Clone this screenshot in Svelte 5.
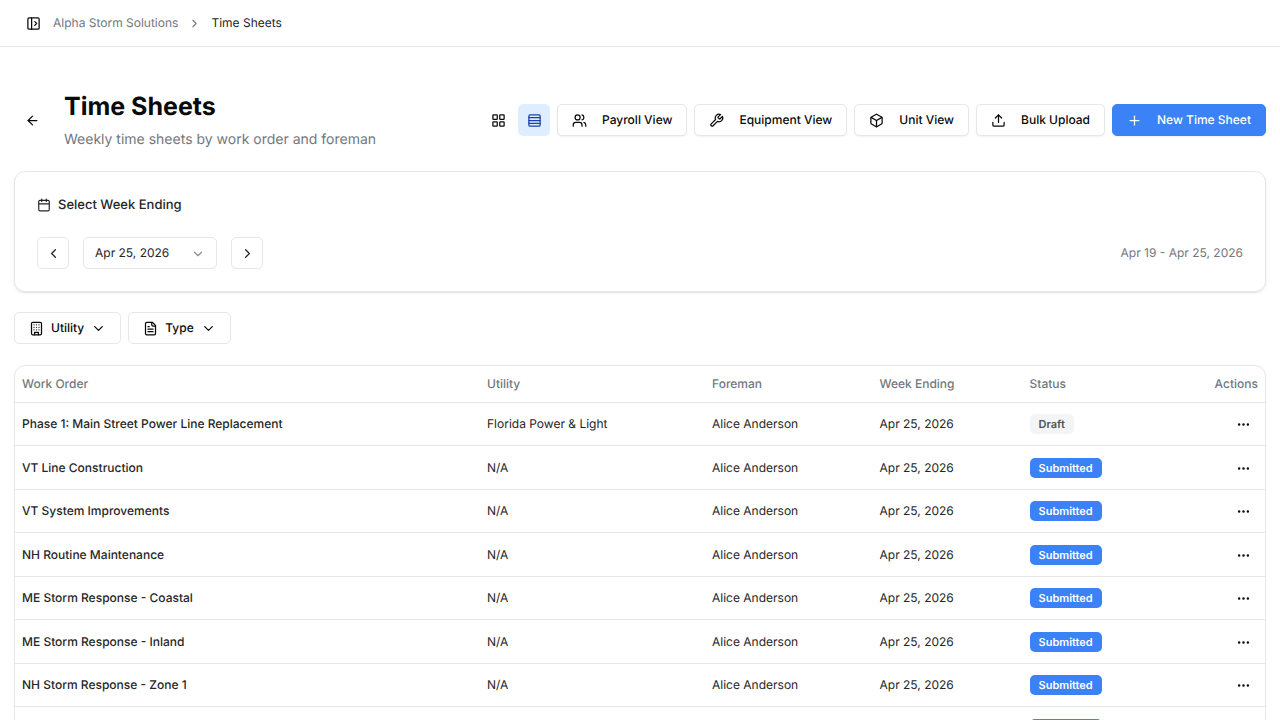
<script lang="ts">
  interface TimeSheet {
    workOrder: string;
    utility: string;
    foreman: string;
    weekEnding: string;
    status: 'Draft' | 'Submitted';
  }

  let view = $state('list');
  let weekEnding = $state('Apr 25, 2026');

  const names = [
    'VT Line Construction',
    'VT System Improvements',
    'NH Routine Maintenance',
    'ME Storm Response - Coastal',
    'ME Storm Response - Inland',
    'NH Storm Response - Zone 1',
    'NH Storm Response - Zone 2',
  ];

  const timeSheets: TimeSheet[] = [
    {
      workOrder: 'Phase 1: Main Street Power Line Replacement',
      utility: 'Florida Power & Light',
      foreman: 'Alice Anderson',
      weekEnding: 'Apr 25, 2026',
      status: 'Draft',
    },
    ...names.map((workOrder): TimeSheet => ({
      workOrder,
      utility: 'N/A',
      foreman: 'Alice Anderson',
      weekEnding: 'Apr 25, 2026',
      status: 'Submitted',
    })),
  ];

  const views = [
    { label: 'Payroll View', icon: 'users' },
    { label: 'Equipment View', icon: 'wrench' },
    { label: 'Unit View', icon: 'box' },
    { label: 'Bulk Upload', icon: 'upload' },
  ];

  const filters = [
    { label: 'Utility', icon: 'building' },
    { label: 'Type', icon: 'file' },
  ];

  const icons: Record<string, string[]> = {
    panel: ['M5 3h14a2 2 0 0 1 2 2v14a2 2 0 0 1-2 2H5a2 2 0 0 1-2-2V5a2 2 0 0 1 2-2z', 'M9 3v18', 'm14 9 3 3-3 3'],
    right: ['m9 18 6-6-6-6'],
    left: ['m15 18-6-6 6-6'],
    down: ['m6 9 6 6 6-6'],
    back: ['m12 19-7-7 7-7', 'M19 12H5'],
    grid: [
      'M4 3h5a1 1 0 0 1 1 1v5a1 1 0 0 1-1 1H4a1 1 0 0 1-1-1V4a1 1 0 0 1 1-1z',
      'M15 3h5a1 1 0 0 1 1 1v5a1 1 0 0 1-1 1h-5a1 1 0 0 1-1-1V4a1 1 0 0 1 1-1z',
      'M15 14h5a1 1 0 0 1 1 1v5a1 1 0 0 1-1 1h-5a1 1 0 0 1-1-1v-5a1 1 0 0 1 1-1z',
      'M4 14h5a1 1 0 0 1 1 1v5a1 1 0 0 1-1 1H4a1 1 0 0 1-1-1v-5a1 1 0 0 1 1-1z',
    ],
    rows: [
      'M5 3h14a2 2 0 0 1 2 2v14a2 2 0 0 1-2 2H5a2 2 0 0 1-2-2V5a2 2 0 0 1 2-2z',
      'M21 7.5H3', 'M21 12H3', 'M21 16.5H3',
    ],
    users: [
      'M16 21v-2a4 4 0 0 0-4-4H6a4 4 0 0 0-4 4v2',
      'M13 7a4 4 0 1 1-8 0a4 4 0 0 1 8 0z',
      'M22 21v-2a4 4 0 0 0-3-3.87',
      'M16 3.13a4 4 0 0 1 0 7.75',
    ],
    wrench: ['M14.7 6.3a1 1 0 0 0 0 1.4l1.6 1.6a1 1 0 0 0 1.4 0l3.77-3.77a6 6 0 0 1-7.94 7.94l-6.91 6.91a2.12 2.12 0 0 1-3-3l6.91-6.91a6 6 0 0 1 7.94-7.94l-3.76 3.76z'],
    box: [
      'M21 8a2 2 0 0 0-1-1.73l-7-4a2 2 0 0 0-2 0l-7 4A2 2 0 0 0 3 8v8a2 2 0 0 0 1 1.73l7 4a2 2 0 0 0 2 0l7-4A2 2 0 0 0 21 16Z',
      'm3.3 7 8.7 5 8.7-5', 'M12 22V12',
    ],
    upload: ['M21 15v4a2 2 0 0 1-2 2H5a2 2 0 0 1-2-2v-4', 'm17 8-5-5-5 5', 'M12 3v12'],
    plus: ['M5 12h14', 'M12 5v14'],
    calendar: ['M8 2v4', 'M16 2v4', 'M5 4h14a2 2 0 0 1 2 2v14a2 2 0 0 1-2 2H5a2 2 0 0 1-2-2V6a2 2 0 0 1 2-2z', 'M3 10h18'],
    building: [
      'M6 2h12a2 2 0 0 1 2 2v16a2 2 0 0 1-2 2H6a2 2 0 0 1-2-2V4a2 2 0 0 1 2-2z',
      'M9 22v-4h6v4', 'M8 6h.01', 'M16 6h.01', 'M12 6h.01', 'M12 10h.01', 'M12 14h.01',
      'M16 10h.01', 'M16 14h.01', 'M8 10h.01', 'M8 14h.01',
    ],
    file: [
      'M15 2H6a2 2 0 0 0-2 2v16a2 2 0 0 0 2 2h12a2 2 0 0 0 2-2V7Z',
      'M14 2v4a2 2 0 0 0 2 2h4', 'M10 9H8', 'M16 13H8', 'M16 17H8',
    ],
    more: [
      'M13 12a1 1 0 1 1-2 0a1 1 0 0 1 2 0z',
      'M20 12a1 1 0 1 1-2 0a1 1 0 0 1 2 0z',
      'M6 12a1 1 0 1 1-2 0a1 1 0 0 1 2 0z',
    ],
  };
</script>

{#snippet icon(name: string)}
  <svg class="icon {name}" viewBox="0 0 24 24" aria-hidden="true">
    {#each icons[name] as d}
      <path {d} />
    {/each}
  </svg>
{/snippet}

<header class="topbar">
  <button class="plain" aria-label="Toggle sidebar">{@render icon('panel')}</button>
  <nav class="breadcrumb" aria-label="Breadcrumb">
    <a href="#home">Alpha Storm Solutions</a>
    {@render icon('right')}
    <span class="current">Time Sheets</span>
  </nav>
</header>

<main>
  <div class="page-header">
    <button class="ghost back-button" aria-label="Back">{@render icon('back')}</button>
    <div class="heading">
      <h1>Time Sheets</h1>
      <p>Weekly time sheets by work order and foreman</p>
    </div>
    <div class="actions">
      <div class="view-toggle">
        <button class="ghost" class:active={view === 'grid'} aria-label="Grid view" onclick={() => (view = 'grid')}>
          {@render icon('grid')}
        </button>
        <button class="ghost" class:active={view === 'list'} aria-label="List view" onclick={() => (view = 'list')}>
          {@render icon('rows')}
        </button>
      </div>
      {#each views as item}
        <button class="btn wide">{@render icon(item.icon)}{item.label}</button>
      {/each}
      <button class="btn wide primary">{@render icon('plus')}New Time Sheet</button>
    </div>
  </div>

  <section class="card">
    <h2>{@render icon('calendar')}<label for="week">Select Week Ending</label></h2>
    <div class="week-row">
      <button class="btn square" aria-label="Previous week">{@render icon('left')}</button>
      <div class="select">
        <select id="week" bind:value={weekEnding}>
          <option>Apr 25, 2026</option>
        </select>
        {@render icon('down')}
      </div>
      <button class="btn square" aria-label="Next week">{@render icon('right')}</button>
      <span class="range">Apr 19 - Apr 25, 2026</span>
    </div>
  </section>

  <div class="filters">
    {#each filters as filter}
      <button class="btn">{@render icon(filter.icon)}{filter.label}{@render icon('down')}</button>
    {/each}
  </div>

  <div class="table-wrap">
    <table>
      <thead>
        <tr>
          <th class="col-order">Work Order</th>
          <th class="col-utility">Utility</th>
          <th class="col-foreman">Foreman</th>
          <th class="col-week">Week Ending</th>
          <th class="col-status">Status</th>
          <th class="col-actions">Actions</th>
        </tr>
      </thead>
      <tbody>
        {#each timeSheets as sheet}
          <tr>
            <td class="order">{sheet.workOrder}</td>
            <td>{sheet.utility}</td>
            <td>{sheet.foreman}</td>
            <td>{sheet.weekEnding}</td>
            <td><span class="badge {sheet.status.toLowerCase()}">{sheet.status}</span></td>
            <td class="col-actions">
              <button class="plain row-menu" aria-label="Actions for {sheet.workOrder}">{@render icon('more')}</button>
            </td>
          </tr>
        {/each}
      </tbody>
    </table>
  </div>
</main>

<style>
  :global(body) {
    background: #fff;
    color: #0a0a0a;
    font-family: Inter, 'Liberation Sans', sans-serif;
    font-size: 12px;
    line-height: 20px;
    text-rendering: geometricPrecision;
    overflow-x: hidden;
  }

  :global(html) {
    scrollbar-width: none;
  }

  button,
  select {
    font: inherit;
    color: inherit;
    text-rendering: inherit;
    cursor: pointer;
  }

  .icon {
    width: 15px;
    height: 15px;
    flex-shrink: 0;
    fill: none;
    stroke: currentColor;
    stroke-width: 2;
    stroke-linecap: round;
    stroke-linejoin: round;
  }

  .topbar {
    display: flex;
    align-items: center;
    gap: 12px;
    height: 46px;
    padding: 0 26px;
    border-bottom: 1px solid #e5e7eb;
  }

  .plain {
    display: flex;
    padding: 0;
    border: 0;
    background: none;
  }

  .breadcrumb {
    display: flex;
    align-items: center;
    gap: 10px;
    color: #737780;
  }

  .breadcrumb a {
    color: inherit;
    text-decoration: none;
  }

  .breadcrumb .icon {
    width: 13px;
    height: 13px;
  }

  .current {
    color: #262626;
  }

  main {
    padding: 43px 14px 0;
  }

  .page-header {
    display: flex;
    align-items: center;
    gap: 14px;
    margin-bottom: 21px;
  }

  .ghost {
    display: flex;
    align-items: center;
    justify-content: center;
    width: 32px;
    height: 32px;
    padding: 0;
    border: 0;
    border-radius: 5px;
    background: none;
  }

  .ghost.active {
    background: #dfeefe;
    color: #1e40af;
  }

  .back-button {
    width: 36px;
  }

  h1 {
    margin: 0;
    font-size: 25px;
    line-height: 34px;
    font-weight: 700;
  }

  .heading p {
    margin: 6px 0 0;
    font-size: 14px;
    line-height: 20px;
    color: #737780;
  }

  .actions {
    display: flex;
    align-items: center;
    gap: 7px;
    margin-left: auto;
  }

  .view-toggle {
    display: flex;
    gap: 4px;
  }

  .btn {
    display: flex;
    align-items: center;
    justify-content: center;
    gap: 7px;
    height: 32px;
    padding: 0 14px;
    border: 1px solid #e5e7eb;
    border-radius: 5px;
    background: #fff;
    font-weight: 500;
    white-space: nowrap;
  }

  .wide {
    gap: 15px;
    box-shadow: 0 1px 2px rgba(0, 0, 0, 0.05);
  }

  .primary {
    border-color: #3b82f6;
    background: #3b82f6;
    color: #fff;
  }

  .square {
    width: 32px;
    padding: 0;
  }

  .card {
    padding: 22px;
    border: 1px solid #e5e7eb;
    border-radius: 11px;
    box-shadow: 0 1px 2px rgba(0, 0, 0, 0.12);
  }

  h2 {
    display: flex;
    align-items: center;
    gap: 7px;
    margin: 0 0 21px;
    font-size: 13px;
    line-height: 22px;
    font-weight: 500;
    color: #262626;
  }

  h2 .icon {
    width: 14px;
    height: 14px;
  }

  .week-row {
    display: flex;
    align-items: center;
    gap: 14px;
    color: #262626;
  }

  .select {
    position: relative;
  }

  select {
    display: block;
    appearance: none;
    width: 134px;
    height: 32px;
    padding: 0 11px;
    border: 1px solid #e5e7eb;
    border-radius: 5px;
    background: #fff;
  }

  .select .icon {
    position: absolute;
    top: 10px;
    right: 12px;
    width: 14px;
    height: 14px;
    color: #8b8b8b;
    pointer-events: none;
  }

  .range {
    margin-left: auto;
    color: #737780;
  }

  .filters {
    display: flex;
    gap: 7px;
    margin: 20px 0 21px;
  }

  .table-wrap {
    border: 1px solid #e5e7eb;
    border-radius: 11px;
    overflow: hidden;
  }

  table {
    width: 100%;
    table-layout: fixed;
    border-spacing: 0;
  }

  th,
  td {
    box-sizing: border-box;
    padding: 11px 7px;
    border-bottom: 1px solid #e5e7eb;
    text-align: left;
    vertical-align: middle;
    color: #262626;
  }

  tbody tr:nth-child(even) td {
    padding: 12px 7px 11px;
  }

  th {
    padding: 8px 7px;
    font-weight: 500;
    color: #737780;
  }

  .col-order {
    width: 37.2%;
  }

  .col-utility {
    width: 18%;
  }

  .col-foreman {
    width: 13.4%;
  }

  .col-week {
    width: 12%;
  }

  .col-status {
    width: 11%;
  }

  .col-actions {
    text-align: right;
  }

  .order {
    font-weight: 500;
  }

  .badge {
    display: inline-block;
    padding: 2px 9px;
    border-radius: 5px;
    font-size: 11px;
    line-height: 16px;
    font-weight: 600;
    vertical-align: top;
  }

  .draft {
    background: #f3f4f6;
    color: #525252;
  }

  .submitted {
    background: #3b82f6;
    color: #fff;
  }

  td .row-menu {
    margin: 0 7px 0 auto;
    color: #0a0a0a;
  }
</style>
